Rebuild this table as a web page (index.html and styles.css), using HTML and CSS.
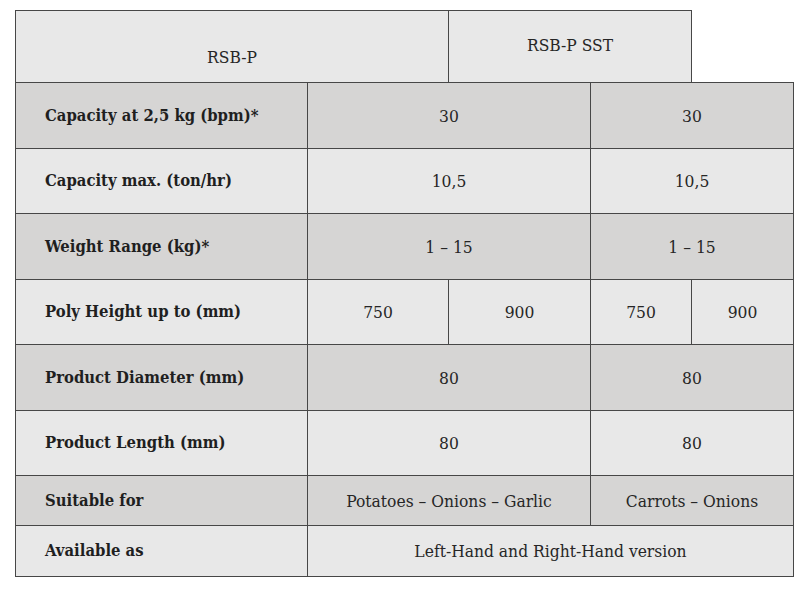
FILE: index.html
```html
<!DOCTYPE html>
<html>
<head>
<meta charset="utf-8">
<link rel="stylesheet" href="styles.css">
</head>
<body>
<table class="spec">
  <colgroup>
    <col class="c-label">
    <col class="c-a1">
    <col class="c-a2">
    <col class="c-b1">
    <col class="c-b2">
  </colgroup>
  <tr class="head">
    <td colspan="2" class="h-main">RSB-P</td>
    <td colspan="2" class="h-sst">RSB-P SST</td>
    <td class="h-empty"></td>
  </tr>
  <tr class="dark r66">
    <th>Capacity at 2,5 kg (bpm)*</th>
    <td colspan="2">30</td>
    <td colspan="2">30</td>
  </tr>
  <tr class="light r65">
    <th>Capacity max. (ton/hr)</th>
    <td colspan="2">10,5</td>
    <td colspan="2">10,5</td>
  </tr>
  <tr class="dark r66">
    <th>Weight Range (kg)*</th>
    <td colspan="2">1 – 15</td>
    <td colspan="2">1 – 15</td>
  </tr>
  <tr class="light r65">
    <th>Poly Height up to (mm)</th>
    <td>750</td>
    <td>900</td>
    <td>750</td>
    <td>900</td>
  </tr>
  <tr class="dark r66">
    <th>Product Diameter (mm)</th>
    <td colspan="2">80</td>
    <td colspan="2">80</td>
  </tr>
  <tr class="light r65">
    <th>Product Length (mm)</th>
    <td colspan="2">80</td>
    <td colspan="2">80</td>
  </tr>
  <tr class="dark r50">
    <th>Suitable for</th>
    <td colspan="2">Potatoes – Onions – Garlic</td>
    <td colspan="2">Carrots – Onions</td>
  </tr>
  <tr class="light r51">
    <th>Available as</th>
    <td colspan="4">Left-Hand and Right-Hand version</td>
  </tr>
</table>
</body>
</html>
```

FILE: styles.css
```css
html, body {
  margin: 0;
  padding: 0;
  background: #ffffff;
}

.spec {
  margin: 10px 0 0 15px;
  border-collapse: collapse;
  table-layout: fixed;
  width: 778px;
  font-family: "DejaVu Serif Condensed", "DejaVu Serif", "Liberation Serif", serif;
  font-size: 17.3px;
  color: #262626;
}

.c-label { width: 292px; }
.c-a1 { width: 141px; }
.c-a2 { width: 142px; }
.c-b1 { width: 101px; }
.c-b2 { width: 102px; }

.spec td,
.spec th {
  border: 1px solid #474747;
  padding: 0;
  line-height: 20px;
  text-align: center;
  vertical-align: middle;
  font-weight: normal;
}

.spec th {
  text-align: left;
  padding-left: 29px;
  font-weight: bold;
  font-size: 16.5px;
  color: #1f1f1f;
}

.head { height: 72px; }
.head td { background: #e8e8e8; }
.h-main {
  vertical-align: bottom !important;
  padding-bottom: 15px !important;
}
.h-sst {
  vertical-align: top !important;
  padding-top: 24px !important;
}
.spec .h-empty {
  background: #ffffff;
  border: none;
}

.dark td, .dark th { background: #d6d5d4; }
.light td, .light th { background: #e8e8e8; }

.r66 { height: 66px; }
.r65 { height: 65px; }
.r50 { height: 50px; }
.r51 { height: 51px; }
```
